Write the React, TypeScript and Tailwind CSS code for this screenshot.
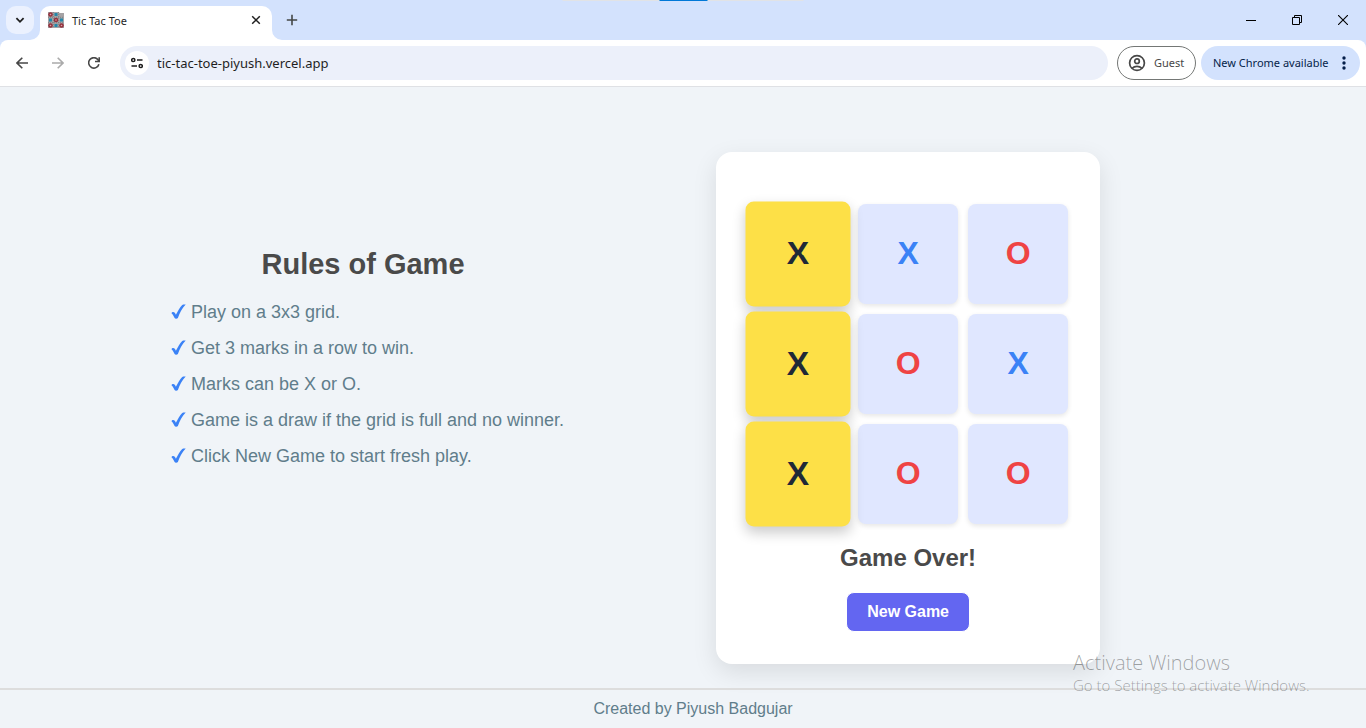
import React from "react";

type Mark = "X" | "O";

const board: Mark[] = ["X", "X", "O", "X", "O", "X", "X", "O", "O"];
const winningCells = [0, 3, 6];

const rules = [
  "Play on a 3x3 grid.",
  "Get 3 marks in a row to win.",
  "Marks can be X or O.",
  "Game is a draw if the grid is full and no winner.",
  "Click New Game to start fresh play.",
];

function Favicon() {
  const spots = [2.5, 8, 13.5];
  return (
    <svg width="16" height="16" viewBox="0 0 16 16" aria-hidden="true">
      <path d="M0 0h11v1h5v15H0z" fill="#a5a3a5" />
      <path d="M5.300 0v16M10.700 0v16M0 5.300h16M0 10.700h16" stroke="#77777b" strokeWidth=".8" strokeDasharray="1 1" />
      {spots.map((y, row) =>
        spots.map((x, col) => {
          if (row === 0 && col === 2) return null;
          return (row + col) % 2 === 0 ? (
            <g key={`${row}${col}`}>
              <circle cx={x} cy={y} r="2.300" fill="#94303c" />
              <circle cx={x} cy={y} r="0.800" fill="#d9a3a8" />
            </g>
          ) : (
            <rect key={`${row}${col}`} x={x - 1.5} y={y - 1.5} width="3" height="3" fill="#2388aa" />
          );
        })
      )}
    </svg>
  );
}

function TabStrip() {
  return (
    <div className="flex h-10 items-stretch bg-[#d3e2fd]">
      <button
        aria-label="Search tabs"
        className="mt-1.5 ml-1.5 flex h-7 w-7 items-center justify-center rounded-[10px] bg-[#ebf1fe]"
      >
        <svg width="10" height="10" viewBox="0 0 10 10" fill="none" stroke="#1f1f1f" strokeWidth="1.8">
          <path d="M1.4 3.2 5 6.8l3.600-3.600" />
        </svg>
      </button>
      <div className="relative mt-1.5 ml-1.5 flex w-[232px] items-center rounded-t-[10px] bg-white pr-2.5 pb-1.5 pl-2">
        <svg className="absolute bottom-0 -left-2.5" width="10" height="10" aria-hidden="true">
          <path d="M10 0v10H0A10 10 0 0 0 10 0z" fill="#fff" />
        </svg>
        <svg className="absolute -right-2.5 bottom-0" width="10" height="10" aria-hidden="true">
          <path d="M0 0v10h10A10 10 0 0 1 0 0z" fill="#fff" />
        </svg>
        <Favicon />
        <span className="ml-2 flex-1 pt-0.5 text-[11px] text-[#1f1f1f]">Tic Tac Toe</span>
        <button aria-label="Close tab" className="flex h-3 w-3 items-center justify-center">
          <svg width="10" height="10" viewBox="0 0 10 10" stroke="#1f1f1f" strokeWidth="1.5">
            <path d="M1.200 1.200l7.600 7.600M8.800 1.200l-7.600 7.600" />
          </svg>
        </button>
      </div>
      <button aria-label="New tab" className="ml-3.5 flex w-3 items-center justify-center">
        <svg width="12" height="12" viewBox="0 0 12 12" stroke="#444746" strokeWidth="1.600">
          <path d="M6 .8v10.400M.8 6h10.400" />
        </svg>
      </button>
      <div className="ml-auto flex">
        <button aria-label="Minimize" className="flex w-[46px] items-center justify-center">
          <svg width="10" height="10" viewBox="0 0 10 10" stroke="#000">
            <path d="M0 5.500h10" />
          </svg>
        </button>
        <button aria-label="Restore" className="flex w-[46px] items-center justify-center">
          <svg width="10" height="10" viewBox="0 0 10 10" fill="none" stroke="#000">
            <path d="M.5 2.500h7v7h-7zM2.500 2.500v-2h7v7h-2" />
          </svg>
        </button>
        <button aria-label="Close" className="flex w-[46px] items-center justify-center">
          <svg width="10" height="10" viewBox="0 0 10 10" stroke="#000" strokeWidth="1.100">
            <path d="M0 0l10 10M10 0L0 10" />
          </svg>
        </button>
      </div>
    </div>
  );
}

function Toolbar() {
  return (
    <div className="bg-[#d3e2fd]">
      <div className="flex h-[47px] items-center rounded-t-lg border-b border-[#dfe1e5] bg-white pr-1.5 pl-4">
        <div className="flex items-center gap-6">
          <button aria-label="Back">
            <svg width="12" height="12" viewBox="0 0 12 12" fill="none" stroke="#474747" strokeWidth="1.600">
              <path d="M12 6H1.200M6.300.7 1 6l5.300 5.300" />
            </svg>
          </button>
          <button aria-label="Forward">
            <svg width="12" height="12" viewBox="0 0 12 12" fill="none" stroke="#ababab" strokeWidth="1.600">
              <path d="M0 6h10.800M5.700.7 11 6l-5.300 5.300" />
            </svg>
          </button>
          <button aria-label="Reload">
            <svg width="12" height="12" viewBox="0 0 12 12" fill="none" stroke="#474747" strokeWidth="1.600">
              <path d="M10.900 7.200A5.200 5.200 0 1 1 10 2.700l1 1.500" />
              <path d="M11.200.2v4.300H7" />
            </svg>
          </button>
        </div>
        <div className="ml-5 flex h-[34px] flex-1 items-center rounded-full bg-[#ecf0fa] pl-[5px]">
          <button
            aria-label="View site information"
            className="flex h-6 w-6 items-center justify-center rounded-full bg-white"
          >
            <svg width="12" height="12" viewBox="0 0 12 12" fill="none" stroke="#1f1f1f" strokeWidth="1.500">
              <circle cx="2.300" cy="3" r="1.600" />
              <path d="M6 3h5.500M.5 9H6" />
              <circle cx="9.700" cy="9" r="1.600" />
            </svg>
          </button>
          <input
            aria-label="Address"
            defaultValue="tic-tac-toe-piyush.vercel.app"
            className="ml-2 min-w-0 flex-1 bg-transparent pt-0.5 text-[13px] text-[#1f1f1f] outline-none"
          />
        </div>
        <button className="ml-[9px] flex h-[34px] w-[79px] items-center gap-2 rounded-full border border-[#747775] pl-2.5 text-[11px] text-[#474747]">
          <svg width="18" height="18" viewBox="0 0 18 18" fill="none" stroke="#474747" strokeWidth="1.700">
            <circle cx="9" cy="9" r="7.400" />
            <circle cx="9" cy="7.200" r="2.300" />
            <path d="M4 14.300c2.800-2.700 7.200-2.700 10 0" />
          </svg>
          Guest
        </button>
        <button className="ml-[5px] flex h-[34px] w-[159px] items-center justify-between rounded-full bg-[#d3e2fd] pr-3.5 pl-3 text-[11px] whitespace-nowrap text-[#041e49]">
          New Chrome available
          <svg width="4" height="14" viewBox="0 0 4 14" fill="#041e49" aria-hidden="true">
            <circle cx="2" cy="2" r="1.700" />
            <circle cx="2" cy="7" r="1.700" />
            <circle cx="2" cy="12" r="1.700" />
          </svg>
        </button>
      </div>
    </div>
  );
}

function Rules() {
  return (
    <section className="mb-24 pb-1">
      <h1 className="mb-4 pr-2 text-center text-[29px] leading-9 font-bold text-[#4a4a4a]">Rules of Game</h1>
      <ul className="flex flex-col gap-2">
        {rules.map((rule) => (
          <li key={rule} className="flex items-center gap-1 text-lg text-[#607d8b]">
            <svg width="17" height="16" viewBox="0 0 17 16" aria-hidden="true">
              <path
                d="M1.500 9.300c.1-1.200 2.300-1.700 3-.7.600.7 1 1.400 1.400 2.200C7.700 7.100 9.800 3.500 12.200.9c.9-.6 2.400-.6 3.500-.4C12 4.500 9.700 9 7.900 13.900c-.6 1-2.900 1.100-3.300.1C3.800 12.300 2.900 10.600 1.500 9.300z"
                fill="#3b82f6"
              />
            </svg>
            {rule}
          </li>
        ))}
      </ul>
    </section>
  );
}

function Cell({ mark, won }: { mark: Mark; won: boolean }) {
  const tone = won
    ? "scale-105 bg-[#fde047] text-[#1f2937] shadow-[0_6px_12px_rgba(0,0,0,0.2)]"
    : mark === "X"
      ? "bg-[#e0e7ff] text-[#3b82f6] shadow-[0_2px_5px_rgba(0,0,0,0.1)]"
      : "bg-[#e0e7ff] text-[#ef4444] shadow-[0_2px_5px_rgba(0,0,0,0.1)]";
  return (
    <button className={`flex h-[100px] w-[100px] items-center justify-center rounded-lg pb-0.5 text-[32px] font-bold ${tone}`}>
      {mark}
    </button>
  );
}

function Game() {
  return (
    <section className="flex flex-col items-center rounded-2xl bg-white px-8 pt-[52px] pb-8 shadow-[0_8px_24px_rgba(0,0,0,0.1)]">
      <div className="grid grid-cols-3 gap-2.5">
        {board.map((mark, i) => (
          <Cell key={i} mark={mark} won={winningCells.includes(i)} />
        ))}
      </div>
      <h2 className="mt-4 text-2xl leading-9 font-bold text-[#4a4a4a]">Game Over!</h2>
      <button className="mt-4 h-10 rounded-lg border border-white bg-[#6366f1] px-5 text-base font-bold text-white">
        New Game
      </button>
    </section>
  );
}

export default function App() {
  return (
    <div className="relative flex min-h-screen flex-col bg-[#f0f4f8] font-['Liberation_Sans',Arial,sans-serif]">
      <header className="font-['Noto_Sans','Open_Sans',sans-serif]">
        <TabStrip />
        <Toolbar />
      </header>
      <main className="flex flex-1 items-center justify-center gap-[152px] pt-10 pr-24">
        <Rules />
        <Game />
      </main>
      <footer className="border-t-2 border-[#dddddd] pt-[7px] pb-[7px] pl-5 text-center text-base text-[#607d8b]">
        Created by Piyush Badgujar
      </footer>
      <div className="absolute top-0 left-1/2 flex h-px w-[241px] -translate-x-1/2 justify-center bg-[#e1e3e6]">
        <div className="w-12 bg-[#0078d7]" />
      </div>
      <aside className="pointer-events-none absolute bottom-[33px] left-[1073px] font-['Open_Sans',sans-serif] font-light text-[#000000]/35">
        <p className="text-xl leading-6">Activate Windows</p>
        <p className="text-[15px] leading-5">Go to Settings to activate Windows.</p>
      </aside>
    </div>
  );
}
